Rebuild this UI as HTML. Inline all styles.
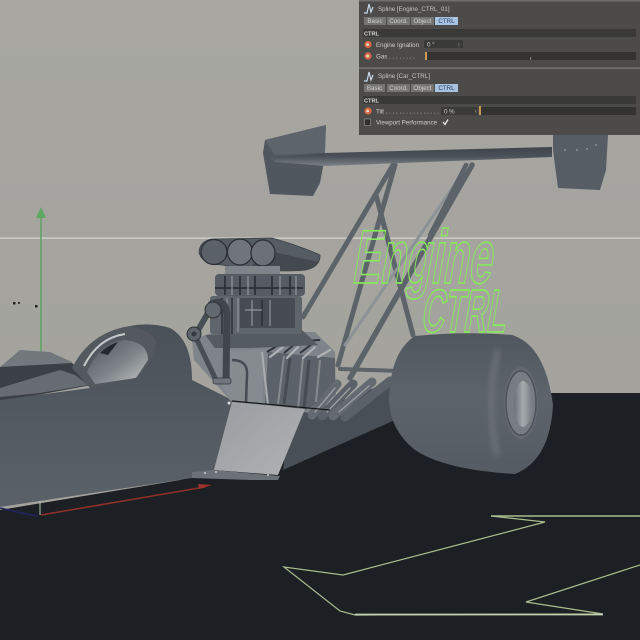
<!DOCTYPE html>
<html><head><meta charset="utf-8"><style>
html,body{margin:0;padding:0;background:#a6a5a0}
svg{display:block}
text{font-family:"Liberation Sans",sans-serif}
</style></head><body>
<svg width="640" height="640" viewBox="0 0 640 640" xmlns="http://www.w3.org/2000/svg">
<defs>
<linearGradient id="bg" x1="0" y1="0" x2="0" y2="1"><stop offset="0" stop-color="#a7a6a1"/><stop offset="1" stop-color="#a2a19c"/></linearGradient>
<linearGradient id="tire" x1="0" y1="0" x2="0" y2="1"><stop offset="0" stop-color="#50575e"/><stop offset=".45" stop-color="#5d646b"/><stop offset="1" stop-color="#545b62"/></linearGradient>
<linearGradient id="body" x1="0" y1="0" x2="0" y2="1"><stop offset="0" stop-color="#4a5159"/><stop offset="1" stop-color="#5a6169"/></linearGradient>
<linearGradient id="plate" x1="0" y1="0" x2="1" y2="1"><stop offset="0" stop-color="#999ca0"/><stop offset="1" stop-color="#b0b2b4"/></linearGradient>
<linearGradient id="hoop" x1="0" y1="0" x2="1" y2="1"><stop offset="0" stop-color="#4e545a"/><stop offset=".55" stop-color="#7e8488"/><stop offset="1" stop-color="#c4c6c6"/></linearGradient>
<linearGradient id="hub" x1="0" y1="0" x2="1" y2="0"><stop offset="0" stop-color="#6b7177"/><stop offset=".5" stop-color="#a6aaad"/><stop offset="1" stop-color="#787e83"/></linearGradient>
<linearGradient id="wing" x1="0" y1="0" x2="0" y2="1"><stop offset="0" stop-color="#3d444b"/><stop offset=".5" stop-color="#4a5158"/><stop offset="1" stop-color="#7c8288"/></linearGradient>
<filter id="b3" x="-50%" y="-50%" width="200%" height="200%"><feGaussianBlur stdDeviation="3"/></filter>
</defs>

<rect width="640" height="640" fill="url(#bg)"/>
<polygon points="0,510 180,480 300,440 400,393 640,393 640,640 0,640" fill="#1c1f23"/>
<rect x="0" y="237.5" width="640" height="1.2" fill="#d4d4d0"/>

<line x1="41" y1="212" x2="41" y2="385" stroke="#62a565" stroke-width="1.6"/>
<polygon points="41,207 36,218 46,218" fill="#5fa862"/>
<line x1="40" y1="498" x2="40" y2="515" stroke="#b5c9b0" stroke-width="1"/>
<path d="M0,508 Q20,513 38,516" stroke="#23235e" stroke-width="1.6" fill="none"/>
<path d="M41,515 L205,487" stroke="#8f2f2a" stroke-width="1.6" fill="none"/>
<polygon points="198,484 212,485 199,489" fill="#9c332c"/>
<rect x="13" y="302" width="2.5" height="2.5" fill="#222"/><rect x="18" y="302" width="2" height="2" fill="#333"/><rect x="35" y="305" width="2.5" height="2.5" fill="#222"/>

<!-- struts -->
<g stroke="#5c6369" stroke-linecap="round" fill="none">
<line x1="393" y1="165" x2="303" y2="317" stroke-width="5"/>
<line x1="395" y1="165" x2="338" y2="365" stroke-width="5"/>
<line x1="376" y1="195" x2="413" y2="335" stroke-width="5"/>
<line x1="472" y1="165" x2="350" y2="378" stroke-width="5.5"/>
<line x1="468" y1="165" x2="345" y2="345" stroke-width="3" stroke="#8d9296"/>
<line x1="466" y1="165" x2="430" y2="235" stroke-width="4.5"/>
<line x1="340" y1="369" x2="400" y2="371" stroke-width="4"/>
</g>

<!-- wing -->
<polygon points="265,140 326,125 323,167 320,183 313,196 270,194 263,153" fill="#50575f"/>
<polygon points="265,140 326,125 325,153 275,155" fill="#5d646b"/>
<polygon points="553,135 608,135 606,170 600,190 558,188 553,150" fill="#565d65"/>
<polygon points="270,158 325,153 552,147 552,157 325,166 275,162" fill="url(#wing)"/>
<circle cx="565" cy="150" r="1" fill="#8a9095"/><circle cx="577" cy="150" r="1" fill="#8a9095"/><circle cx="587" cy="149" r="1" fill="#8a9095"/><circle cx="596" cy="145" r="1" fill="#8a9095"/>

<polygon points="290,410 330,405 395,380 395,420 283,470" fill="#484f56"/>

<!-- engine block -->
<polygon points="192,340 215,332 315,332 335,352 336,395 310,413 232,402 194,360" fill="#7e8489"/>
<polygon points="225,350 265,350 262,405 230,400 222,385" fill="#868b90"/>
<polygon points="268,352 335,358 335,395 305,410 265,404" fill="#5b6269"/>
<g stroke="#858a8e" stroke-width="2"><line x1="284" y1="356" x2="278" y2="404"/><line x1="303" y1="358" x2="298" y2="408"/><line x1="320" y1="360" x2="316" y2="402"/></g>
<g stroke="#464c52" stroke-width="3"><line x1="290" y1="358" x2="284" y2="404"/><line x1="309" y1="360" x2="304" y2="408"/></g>
<path d="M262,352 L268,405" stroke="#a9adb0" stroke-width="2"/>
<!-- headers -->
<g stroke="#aeb2b5" stroke-width="2.2" fill="none" stroke-linecap="round"><line x1="270" y1="357" x2="283" y2="347"/><line x1="287" y1="358" x2="298" y2="347"/><line x1="303" y1="358" x2="315" y2="347"/><line x1="318" y1="357" x2="330" y2="350"/></g>
<g stroke="#30353a" stroke-width="2" fill="none"><line x1="267" y1="352" x2="280" y2="344"/><line x1="284" y1="353" x2="295" y2="344"/><line x1="300" y1="353" x2="312" y2="344"/><path d="M226,345 L320,340"/></g>
<polygon points="205,335 302,330 318,345 250,348 215,348" fill="#545b61"/>
<!-- blower -->
<rect x="210" y="296" width="92" height="38" rx="3" fill="#5e656b"/>
<rect x="240" y="298" width="55" height="30" fill="#464c52"/>
<g stroke="#2b3035" stroke-width="1.5"><line x1="222" y1="298" x2="222" y2="334"/><line x1="232" y1="298" x2="232" y2="334"/><line x1="262" y1="300" x2="262" y2="326"/></g>
<g stroke="#8f9498" stroke-width="1.2"><line x1="227" y1="298" x2="227" y2="334"/><line x1="238" y1="298" x2="238" y2="332"/><line x1="252" y1="300" x2="252" y2="326"/><line x1="270" y1="300" x2="270" y2="326"/><line x1="245" y1="310" x2="262" y2="310"/></g>
<!-- carbs -->
<rect x="215" y="274" width="90" height="22" rx="4" fill="#555c63"/>
<g stroke="#2c3136" stroke-width="1.8"><line x1="225" y1="276" x2="225" y2="295"/><line x1="240" y1="276" x2="240" y2="295"/><line x1="255" y1="276" x2="255" y2="295"/><line x1="272" y1="276" x2="272" y2="295"/><line x1="290" y1="276" x2="290" y2="295"/><line x1="215" y1="288" x2="303" y2="288"/></g>
<g stroke="#9fa4a8" stroke-width="1"><line x1="232" y1="276" x2="232" y2="295"/><line x1="248" y1="276" x2="248" y2="295"/><line x1="280" y1="276" x2="280" y2="295"/><line x1="296" y1="276" x2="296" y2="295"/></g>
<!-- belts -->
<path d="M210,305 Q225,296 227,315 L226,382" stroke="#40464c" stroke-width="7" fill="none"/>
<g stroke="#484e55" fill="none"><line x1="197" y1="340" x2="216" y2="380" stroke-width="5"/><line x1="197" y1="332" x2="212" y2="306" stroke-width="6"/></g>
<circle cx="194" cy="334" r="7" fill="#5c6369" stroke="#2d3237"/><circle cx="194" cy="334" r="2.5" fill="#353a40"/>
<circle cx="213" cy="310" r="8" fill="#61686e" stroke="#30353a"/>
<rect x="213" y="378" width="18" height="6" rx="2" fill="#70767c" stroke="#30353a" stroke-width=".7"/>
<path d="M232,360 Q248,360 247,375 L246,402" stroke="#454b52" stroke-width="2.5" fill="none"/>
<!-- scoop -->
<path d="M199,252 Q200,241 212,239 L272,238 Q300,246 320,255 Q321,266 305,270 Q270,273 222,265 Q201,264 199,252Z" fill="#555c64" stroke="#3a3f45" stroke-width=".8"/>
<path d="M265,250 Q300,258 319,262 Q315,270 300,271 Q270,272 250,268Z" fill="#43494f"/>
<ellipse cx="214" cy="252" rx="13" ry="12.5" fill="#5a6168" stroke="#2a2e33" stroke-width="1.2"/>
<ellipse cx="240" cy="252" rx="12.5" ry="13" fill="#6f757b" stroke="#2a2e33" stroke-width="1.2"/>
<ellipse cx="263" cy="253" rx="12" ry="13" fill="#6b7177" stroke="#2a2e33" stroke-width="1.2"/>
<rect x="225" y="266" width="55" height="8" fill="#7f8488"/>

<!-- exhaust -->
<g stroke-linecap="round" fill="none">
<line x1="312" y1="415" x2="337" y2="384" stroke="#636a71" stroke-width="9"/>
<line x1="322" y1="416" x2="353" y2="384" stroke="#5a6168" stroke-width="9"/>
<line x1="333" y1="416" x2="372" y2="382" stroke="#636a71" stroke-width="9"/>
<line x1="345" y1="417" x2="390" y2="381" stroke="#5a6168" stroke-width="9"/>
<line x1="315" y1="412" x2="335" y2="388" stroke="#999ea1" stroke-width="1.4"/>
<line x1="327" y1="412" x2="350" y2="388" stroke="#999ea1" stroke-width="1.4"/>
<line x1="339" y1="412" x2="369" y2="386" stroke="#999ea1" stroke-width="1.4"/>
</g>

<!-- tire -->
<path d="M415,336 Q465,331 512,335 Q545,345 553,405 Q550,460 515,474 Q445,470 415,450 Q390,430 389,400 Q390,352 415,336Z" fill="url(#tire)"/>
<path d="M498,350 Q485,400 497,455" stroke="#6d7379" stroke-width="5" fill="none" filter="url(#b3)"/>
<ellipse cx="521" cy="403" rx="17" ry="36" fill="#626970"/>
<ellipse cx="521" cy="403" rx="15" ry="32" fill="#777d82" stroke="#4a5056" stroke-width="1.4"/>
<ellipse cx="523" cy="404" rx="9" ry="23" fill="url(#hub)"/>

<!-- rear deck -->
<polygon points="0,367 20,350 50,352 72,362 72,368 0,372" fill="#73787d"/>
<polygon points="0,367 72,363 90,380 140,376 0,402" fill="#3a4046"/>
<polygon points="0,388 33,378 60,370 75,375 88,385 40,393 0,397" fill="#666c71"/>
<!-- hoop -->
<path d="M72,368 Q90,332 130,326 L160,328 L158,380 L90,388Z" fill="#53595f"/>
<path d="M87,372 Q100,342 125,340 Q148,342 148,360 L136,378 L95,384Z" fill="url(#hoop)"/>
<path d="M84,366 Q98,338 125,334" stroke="#c8cbcc" stroke-width="2" fill="none"/>
<path d="M100,353 Q108,345 118,342 L108,355Z" fill="#25292d"/>

<!-- body -->
<path d="M0,400 L90,388 L139,377 Q153,360 156,343 Q155,332 130,326 Q150,322 170,328 Q192,340 192,380 L228,398 L232,402 L214,470 L192,478 L0,507Z" fill="url(#body)"/>

<!-- side plate -->
<polygon points="232,402 305,409 278,475 214,470" fill="url(#plate)"/>
<polygon points="192,472 214,470 280,476 278,480 250,480 192,478" fill="#6b7177"/>
<line x1="232" y1="401" x2="330" y2="410" stroke="#15181b" stroke-width="1.2"/>
<circle cx="229" cy="403" r="1.5" fill="#ddd"/><circle cx="205" cy="473" r="1" fill="#ccc"/><circle cx="216" cy="472" r="1" fill="#ccc"/><circle cx="268" cy="475" r="1" fill="#ccc"/>

<!-- green text -->
<g fill="none" stroke="#86e85c" font-weight="bold">
<text font-size="76" transform="translate(351,283) skewX(-10) scale(.55,1)" stroke-width="1.7">Engine</text>
<text font-size="61" transform="translate(420,332) skewX(-10) scale(.52,1)" stroke-width="1.8">CTRL</text>
</g>

<!-- spline on floor -->
<g fill="none" stroke="#a9bd8e" stroke-width="1.2">
<path d="M491,516 L640,516" stroke-width="1.6"/>
<path d="M491,516 L545,522 L343,575 L284,567 L340,611 L355,615 L603,614 L526,602 L640,565"/>
<path d="M355,614.5 L603,614.5" stroke-width="1.8" stroke="#c3d0ab"/>
</g>

<!-- panel -->
<rect x="359" y="0" width="281" height="135" fill="#4c4b4a"/>
<rect x="359" y="0" width="281" height="1.5" fill="#6e6e6c"/>
<rect x="359" y="67.5" width="281" height="1.2" fill="#7e7e7c"/>
<path d="M364,13 L367,13 L369,4 L371,12 L373,7" stroke="#c8d8ea" stroke-width="1.2" fill="none"/>
<path d="M364,81 L367,81 L369,72 L371,80 L373,75" stroke="#c8d8ea" stroke-width="1.2" fill="none"/>
<text x="378" y="11" font-size="6.2" fill="#c5c5c5">Spline [Engine_CTRL_01]</text>
<text x="378" y="78" font-size="6.2" fill="#c5c5c5">Spline [Car_CTRL]</text>

<g font-size="6.2" text-anchor="middle">
<rect x="364" y="17" width="22" height="8" fill="#747472"/><text x="375" y="23.2" fill="#d0d0d0">Basic</text>
<rect x="387" y="17" width="23" height="8" fill="#747472"/><text x="398.5" y="23.2" fill="#d0d0d0">Coord.</text>
<rect x="411" y="17" width="23" height="8" fill="#747472"/><text x="422.5" y="23.2" fill="#d0d0d0">Object</text>
<rect x="435" y="17" width="23" height="8" fill="#a9c3e3"/><text x="446.5" y="23.2" fill="#2a3d5c">CTRL</text>
<rect x="364" y="84" width="21" height="8" fill="#747472"/><text x="374.5" y="90.2" fill="#d0d0d0">Basic</text>
<rect x="387" y="84" width="23" height="8" fill="#747472"/><text x="398.5" y="90.2" fill="#d0d0d0">Coord.</text>
<rect x="411" y="84" width="23" height="8" fill="#747472"/><text x="422.5" y="90.2" fill="#d0d0d0">Object</text>
<rect x="435" y="84" width="23" height="8" fill="#a9c3e3"/><text x="446.5" y="90.2" fill="#2a3d5c">CTRL</text>
</g>

<rect x="363" y="29" width="273" height="8" fill="#393938"/><text x="364" y="35.3" font-size="5.6" font-weight="bold" fill="#dcdcdc">CTRL</text>
<rect x="363" y="96" width="273" height="8" fill="#393938"/><text x="364" y="102.3" font-size="5.6" font-weight="bold" fill="#dcdcdc">CTRL</text>

<g fill="#d66a45"><circle cx="368" cy="44.5" r="3.6"/><circle cx="368" cy="56" r="3.6"/><circle cx="368" cy="111" r="3.6"/></g>
<g fill="#eedccb"><circle cx="367.6" cy="44.5" r="1.4"/><circle cx="367.6" cy="56" r="1.4"/><circle cx="367.6" cy="111" r="1.4"/></g>

<text x="376" y="47" font-size="6.2" fill="#cfcfcf">Engine Ignation</text>
<rect x="424" y="40" width="39" height="8" fill="#3a3a39"/><text x="427" y="46.5" font-size="6.2" fill="#cfcfcf">0 °</text><text x="458" y="46.5" font-size="5.5" fill="#cfcfcf">⁝</text>
<text x="376" y="58.5" font-size="6.2" fill="#cfcfcf">Gas . . . . . . . .</text>
<rect x="425" y="52" width="211" height="8" fill="#333332"/><rect x="425" y="52" width="2" height="8" fill="#c59b53"/>
<rect x="530" y="57" width="1.2" height="3" fill="#7a7a78"/>

<text x="376" y="113.5" font-size="6.2" fill="#cfcfcf">Tilt . . . . . . . . . . . . . . . . . .</text>
<rect x="441" y="107" width="37" height="8" fill="#3a3a39"/><text x="444" y="113.5" font-size="6.2" fill="#cfcfcf">0 %</text><text x="475" y="113.5" font-size="5.5" fill="#cfcfcf">⁝</text>
<rect x="480" y="107" width="156" height="8" fill="#333332"/><rect x="479" y="106" width="2" height="9" fill="#c59b53"/>

<rect x="364.5" y="119" width="6" height="6.5" fill="#2e2e2d" stroke="#aaa" stroke-width=".5"/>
<text x="376" y="124.5" font-size="6.2" fill="#cfcfcf">Viewport Performance</text>
<path d="M443,122 L445,124.5 L448,119.5" stroke="#e8e8e8" stroke-width="1.3" fill="none"/>
</svg>
</body></html>
